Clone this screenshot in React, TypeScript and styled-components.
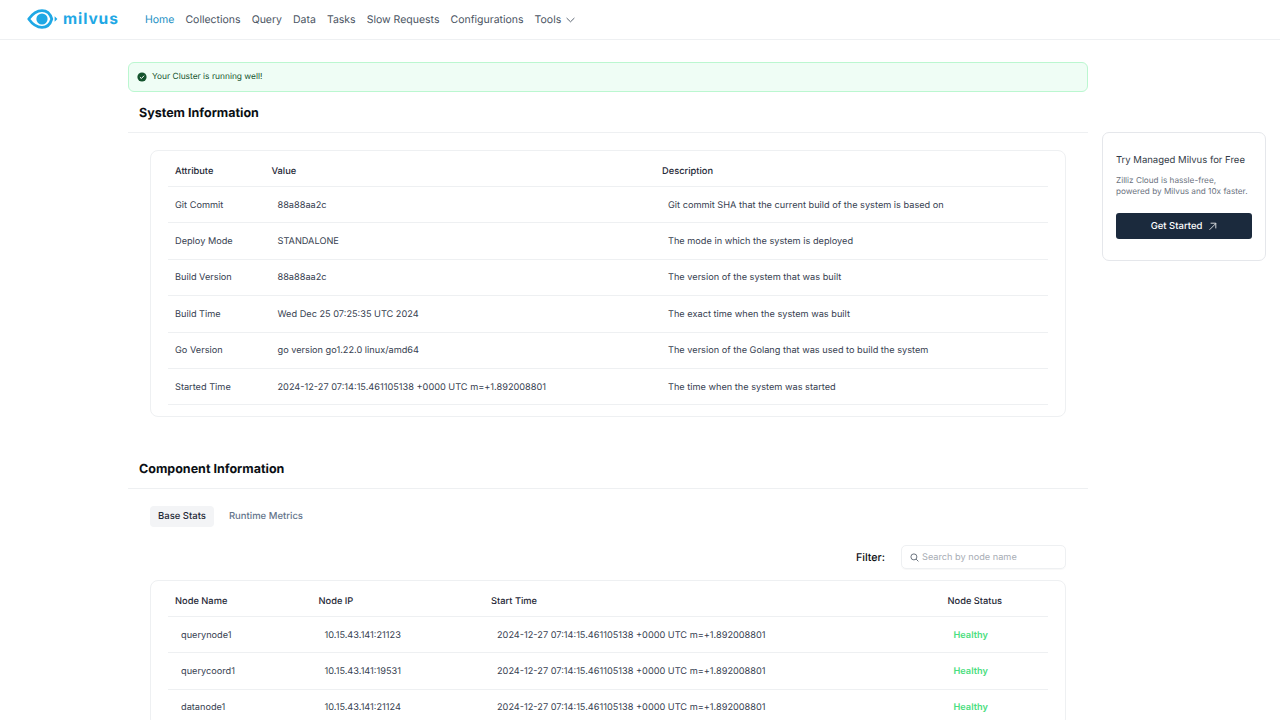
import React from 'react';
import styled, { createGlobalStyle } from 'styled-components';

const GlobalStyle = createGlobalStyle`
  html, body {
    margin: 0;
    padding: 0;
    height: 100%;
    overflow: hidden;
    background: #fff;
    font-family: Inter, "Liberation Sans", sans-serif;
    text-rendering: geometricPrecision;
  }
`;

const navItems = ['Home', 'Collections', 'Query', 'Data', 'Tasks', 'Slow Requests', 'Configurations'];

const systemColumns = [96.5, 390.5, 393];
const systemRows = [
  ['Git Commit', '88a88aa2c', 'Git commit SHA that the current build of the system is based on'],
  ['Deploy Mode', 'STANDALONE', 'The mode in which the system is deployed'],
  ['Build Version', '88a88aa2c', 'The version of the system that was built'],
  ['Build Time', 'Wed Dec 25 07:25:35 UTC 2024', 'The exact time when the system was built'],
  ['Go Version', 'go version go1.22.0 linux/amd64', 'The version of the Golang that was used to build the system'],
  ['Started Time', '2024-12-27 07:14:15.461105138 +0000 UTC m=+1.892008801', 'The time when the system was started'],
];

const startTime = '2024-12-27 07:14:15.461105138 +0000 UTC m=+1.892008801';
const nodeColumns = [143.5, 172.5, 456.5, 107.5];
const nodeRows = [
  ['querynode1', '10.15.43.141:21123', startTime],
  ['querycoord1', '10.15.43.141:19531', startTime],
  ['datanode1', '10.15.43.141:21124', startTime],
];

const App = () => {
  return (
    <>
      <GlobalStyle />
      <Header>
        <Logo>
          <EyeIcon />
          <LogoText>milvus</LogoText>
        </Logo>
        <Nav>
          {navItems.map((item) => (
            <NavItem key={item} $active={item === 'Home'}>
              {item}
            </NavItem>
          ))}
          <NavItem>
            Tools
            <svg width="9" height="6" viewBox="0 0 9 6" fill="none">
              <path d="M.6 1l3.900 3.800L8.400 1" stroke="#5b6572" strokeWidth="1" />
            </svg>
          </NavItem>
        </Nav>
      </Header>
      <Page>
        <Main>
          <Alert>
            <svg width="10" height="10" viewBox="0 0 10 10">
              <circle cx="5" cy="5" r="4.600" fill="#14532d" />
              <path d="M2.900 5.100l1.500 1.400 2.700-2.800" fill="none" stroke="#fff" strokeWidth="1" />
            </svg>
            Your Cluster is running well!
          </Alert>
          <SectionTitle>System Information</SectionTitle>
          <SystemCard>
            <Table>
              <colgroup>
                {systemColumns.map((w, i) => (
                  <Col key={i} $w={w} />
                ))}
              </colgroup>
              <thead>
                <tr>
                  <Th>Attribute</Th>
                  <Th>Value</Th>
                  <Th>Description</Th>
                </tr>
              </thead>
              <tbody>
                {systemRows.map((row) => (
                  <tr key={row[0]}>
                    <Td>{row[0]}</Td>
                    <Td $inset>{row[1]}</Td>
                    <Td $inset>{row[2]}</Td>
                  </tr>
                ))}
              </tbody>
            </Table>
          </SystemCard>
          <ComponentTitle>Component Information</ComponentTitle>
          <Tabs>
            <Tab $active>Base Stats</Tab>
            <Tab>Runtime Metrics</Tab>
          </Tabs>
          <FilterRow>
            <FilterLabel>Filter:</FilterLabel>
            <SearchBox>
              <svg width="9" height="9" viewBox="0 0 9 9" fill="none">
                <circle cx="3.900" cy="3.900" r="3" stroke="#5b6572" strokeWidth="0.9" />
                <path d="M6.100 6.100l2.300 2.300" stroke="#5b6572" strokeWidth="0.9" />
              </svg>
              <SearchInput placeholder="Search by node name" />
            </SearchBox>
          </FilterRow>
          <NodeCard>
            <Table>
              <colgroup>
                {nodeColumns.map((w, i) => (
                  <Col key={i} $w={w} />
                ))}
              </colgroup>
              <thead>
                <tr>
                  <Th>Node Name</Th>
                  <Th>Node IP</Th>
                  <Th>Start Time</Th>
                  <Th>Node Status</Th>
                </tr>
              </thead>
              <tbody>
                {nodeRows.map((row) => (
                  <tr key={row[0]}>
                    <Td $inset>{row[0]}</Td>
                    <Td $inset>{row[1]}</Td>
                    <Td $inset>{row[2]}</Td>
                    <Td $inset>
                      <Healthy>Healthy</Healthy>
                    </Td>
                  </tr>
                ))}
              </tbody>
            </Table>
          </NodeCard>
        </Main>
        <Promo>
          <PromoTitle>Try Managed Milvus for Free</PromoTitle>
          <PromoText>
            Zilliz Cloud is hassle-free,
            <br />
            powered by Milvus and 10x faster.
          </PromoText>
          <PromoButton type="button">
            Get Started
            <svg width="9" height="9" viewBox="0 0 9 9" fill="none">
              <path d="M1.500 7.800L7.800 1.500M2.600 1.200h5.200v5.200" stroke="#fff" strokeWidth="0.8" />
            </svg>
          </PromoButton>
        </Promo>
      </Page>
    </>
  );
};

const EyeIcon = () => (
  <svg width="31" height="20" viewBox="0 0 31 20" fill="none">
    <path
      d="M1.700 10C5 5.400 9.600 1.600 15 1.600c5 0 8.400 3.600 9.800 8.400-1.400 4.800-4.800 8.400-9.800 8.400-5.400 0-10-3.800-13.300-8.400z"
      stroke="#1fa8e5"
      strokeWidth="2.700"
      strokeLinejoin="round"
    />
    <circle cx="15" cy="10" r="5.600" fill="#1fa8e5" />
    <path d="M27.600 7.300L30.400 10l-2.800 2.700z" fill="#1fa8e5" />
  </svg>
);

export default App;

const Header = styled.header`
  display: flex;
  align-items: center;
  height: 39px;
  border-bottom: 1px solid #eef0f2;
  padding-left: 27px;
`;

const Logo = styled.div`
  display: flex;
  align-items: center;
  gap: 5px;
  width: 118px;
  margin-bottom: 2px;
`;

const LogoText = styled.span`
  font-family: Inter, sans-serif;
  font-size: 15.500px;
  font-weight: 700;
  letter-spacing: 0.9px;
  color: #1fa8e5;
  line-height: 1;
`;

const Nav = styled.nav`
  display: flex;
  align-items: center;
  gap: 11px;
`;

const NavItem = styled.a<{ $active?: boolean }>`
  display: flex;
  align-items: center;
  gap: 5px;
  font-size: 10.500px;
  color: ${(p) => (p.$active ? '#1b8fc4' : '#4b5563')};
`;

const Page = styled.div`
  display: flex;
  align-items: flex-start;
  padding: 22px 0 0 128px;
`;

const Main = styled.main`
  width: 960px;
  flex-shrink: 0;
`;

const Alert = styled.div`
  display: flex;
  align-items: center;
  gap: 5px;
  box-sizing: border-box;
  height: 30px;
  padding: 0 8px;
  background: #effdf5;
  border: 1px solid #bbf7d0;
  border-radius: 6px;
  font-size: 8.400px;
  color: #14532d;
`;

const SectionTitle = styled.h2`
  box-sizing: border-box;
  height: 41px;
  margin: 0;
  padding: 11px 0 0 11px;
  border-bottom: 1px solid #eef0f2;
  font-size: 12.500px;
  line-height: 21px;
  font-weight: 700;
  color: #0b0f14;
`;

const ComponentTitle = styled(SectionTitle)`
  height: 42px;
  margin-top: 30px;
  padding-top: 12px;
`;

const Card = styled.section`
  box-sizing: border-box;
  width: 916px;
  margin-left: 22px;
  padding: 2px 17px 0;
  border: 1px solid #eef0f2;
  border-radius: 8px;
  background: #fff;
`;

const SystemCard = styled(Card)`
  height: 267px;
  margin-top: 17px;
`;

const NodeCard = styled(Card)`
  margin-top: 11px;
`;

const Table = styled.table`
  width: 880px;
  table-layout: fixed;
  border-collapse: collapse;
`;

const Col = styled.col<{ $w: number }>`
  width: ${(p) => p.$w}px;
`;

const Th = styled.th`
  height: 29px;
  padding: 4px 0 0 7px;
  border-bottom: 1px solid #eef0f2;
  text-align: left;
  font-size: 9.300px;
  font-weight: 500;
  color: #1f2937;
`;

const Td = styled.td<{ $inset?: boolean }>`
  height: 34.400px;
  padding: 1px 0 0 ${(p) => (p.$inset ? 13 : 7)}px;
  border-bottom: 1px solid #eef0f2;
  font-size: 9.200px;
  color: #374151;
  white-space: nowrap;
`;

const Healthy = styled.span`
  font-weight: 600;
  color: #4ade80;
`;

const Tabs = styled.div`
  display: flex;
  gap: 7px;
  margin: 17px 0 0 22px;
`;

const Tab = styled.div<{ $active?: boolean }>`
  padding: 0 8px;
  height: 21px;
  line-height: 21px;
  border-radius: 4px;
  font-size: 9.500px;
  font-weight: 500;
  background: ${(p) => (p.$active ? '#f3f4f6' : 'transparent')};
  color: ${(p) => (p.$active ? '#1f2937' : '#64748b')};
`;

const FilterRow = styled.div`
  display: flex;
  align-items: center;
  justify-content: flex-end;
  gap: 16px;
  width: 938px;
  margin-top: 18px;
`;

const FilterLabel = styled.span`
  font-size: 10.700px;
  font-weight: 500;
  color: #0b0f14;
`;

const SearchBox = styled.label`
  display: flex;
  align-items: center;
  gap: 3px;
  box-sizing: border-box;
  width: 165px;
  height: 24px;
  padding: 0 8px;
  border: 1px solid #eef0f2;
  border-radius: 5px;
  box-shadow: 0 1px 1px rgba(0, 0, 0, 0.03);
`;

const SearchInput = styled.input`
  flex: 1;
  min-width: 0;
  border: none;
  outline: none;
  padding: 0;
  font-family: inherit;
  font-size: 9.200px;
  text-rendering: geometricPrecision;
  &::placeholder {
    color: #a8adb5;
  }
`;

const Promo = styled.aside`
  box-sizing: border-box;
  flex-shrink: 0;
  width: 164px;
  height: 129px;
  margin: 70px 0 0 14px;
  padding: 21px 13px 0;
  border: 1px solid #e5e7eb;
  border-radius: 7px;
`;

const PromoTitle = styled.div`
  font-size: 9.500px;
  line-height: 14px;
  color: #333b47;
`;

const PromoText = styled.div`
  margin-top: 7px;
  font-size: 8.200px;
  line-height: 11px;
  color: #6b7280;
`;

const PromoButton = styled.button`
  display: flex;
  align-items: center;
  justify-content: center;
  gap: 6px;
  width: 136px;
  height: 26px;
  margin-top: 16px;
  border: none;
  border-radius: 3px;
  background: #1b2a3d;
  color: #fff;
  font-family: inherit;
  font-size: 9.500px;
  font-weight: 500;
  text-rendering: geometricPrecision;
`;
